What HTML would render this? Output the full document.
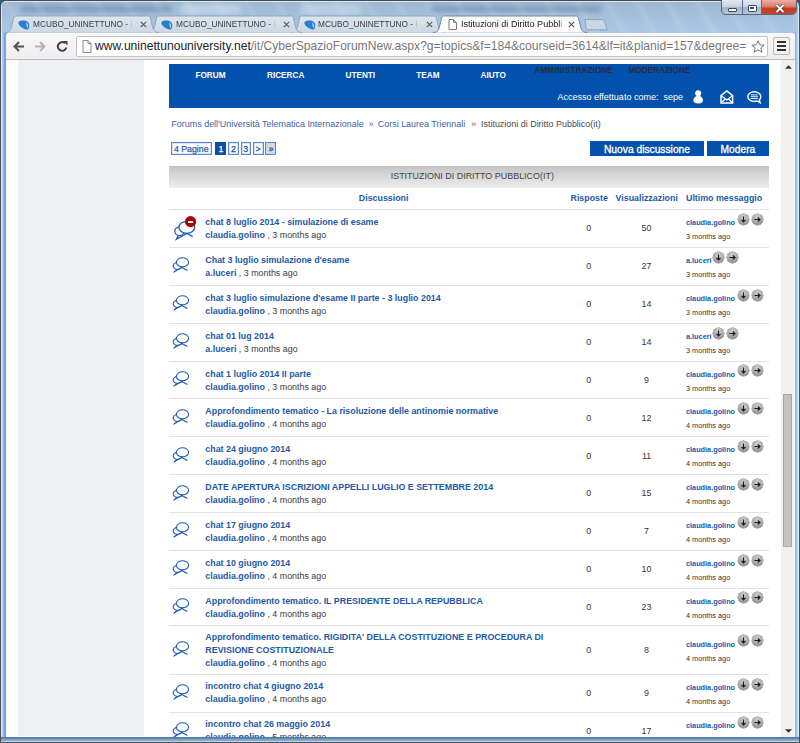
<!DOCTYPE html><html><head><meta charset="utf-8"><style>
*{box-sizing:border-box}
html,body{margin:0;padding:0}
body{width:800px;height:743px;overflow:hidden;position:relative;font-family:"Liberation Sans",sans-serif;background:#2f5876}
.abs{position:absolute}
#glass{position:absolute;left:0;top:0;width:800px;height:743px;background:linear-gradient(180deg,#9db8d2 0px,#a3bed8 12px,#a8c7e6 30px,#a3c0dc 400px,#8fb0d0 743px);border:1px solid #454a50;border-radius:6px 6px 0 0;box-shadow:inset 0 0 0 1px rgba(225,242,255,.85)}
.tab{position:absolute;top:16px;height:17px}
.tabtxt{position:absolute;top:3px;font-size:10.2px;color:#333;white-space:nowrap;overflow:hidden}
#toolbar{position:absolute;left:6px;top:33px;width:789px;height:27px;background:linear-gradient(#f8f8f8,#eeeeee);border-bottom:1px solid #b9b9b9;border-radius:3px 3px 0 0}
#vp{position:absolute;left:6px;top:60px;width:775px;height:677px;background:#fff;overflow:hidden}
#sb{position:absolute;left:781px;top:60px;width:14px;height:677px;background:#f0f0f0;border-right:1px solid #fff}
.t{position:absolute;white-space:nowrap;line-height:1}
.nav{font-size:8.2px;font-weight:bold;color:#fff}
.sep{position:absolute;left:163px;width:600px;height:1px;background:#e3e3e3}
.ttl{font-size:8.9px;font-weight:bold;color:#2459a8}
.au{font-size:8.9px;color:#3b3b3b}
.au b{color:#2459a8}
.num{font-size:8.9px;color:#333;text-align:center;width:40px}
.lm{font-size:7.3px;font-weight:bold;color:#2459a8}
.lt{font-size:7.3px;color:#333}
.rb{position:absolute;width:11px;height:11px;border-radius:50%;background:radial-gradient(circle at 50% 30%,#d2d2d2 0%,#a6a6a6 55%,#7a7a7a 100%);box-shadow:0 0 0 0.4px #6a6a6a}
.pg{position:absolute;top:82px;height:13px;border:1px solid #5a8ad0;box-shadow:inset 0 0 0 0.6px #b9cfee;font-size:8.8px;color:#2459a8;text-align:center;line-height:12px;background:#fff;-webkit-text-stroke:0.25px currentColor}
</style></head><body>
<div id="glass"></div>
<div class="abs" style="left:1px;top:1px;width:798px;height:32px;overflow:hidden;border-radius:5px 5px 0 0">
 <div class="abs" style="left:20px;top:5px;width:150px;height:6px;background:#5f7fa3;opacity:.55;filter:blur(2.5px)"></div>
 <div class="abs" style="left:180px;top:3px;width:60px;height:10px;background:#e8f0f8;opacity:.45;filter:blur(3px)"></div>
 <div class="abs" style="left:300px;top:2px;width:60px;height:12px;background:#e8f0f8;opacity:.35;filter:blur(3px)"></div>
 <div class="abs" style="left:430px;top:5px;width:170px;height:6px;background:#5f7fa3;opacity:.5;filter:blur(2.5px)"></div>
 <div class="abs" style="left:0;top:0;width:800px;height:32px;background:repeating-linear-gradient(60deg,rgba(255,255,255,0) 0px,rgba(255,255,255,0) 14px,rgba(255,255,255,.1) 20px,rgba(255,255,255,0) 26px)"></div>
</div>

<div class="abs" style="left:720.5px;top:-1px;width:76.5px;height:16px;border:1px solid #51667d;border-radius:0 0 5px 5px;overflow:hidden;background:linear-gradient(#e0e8f0 0%,#c9d6e3 45%,#9fb4ca 55%,#b8cadb 100%)">
 <div class="abs" style="left:20px;top:0;width:1px;height:16px;background:#5a6f86"></div>
 <div class="abs" style="left:39.5px;top:0;width:1px;height:16px;background:#5a6f86"></div>
 <div class="abs" style="left:40.5px;top:0;width:36px;height:16px;background:linear-gradient(#eab0a2 0%,#d9806c 40%,#c2391f 55%,#c64f33 100%)"></div>
 <div class="abs" style="left:6px;top:8px;width:9.5px;height:4px;background:#fff;border:1px solid #3d4b5c;border-radius:1px"></div>
 <div class="abs" style="left:26px;top:4.5px;width:9px;height:7px;border:1.3px solid #3d4b5c;background:#fff;border-radius:1px"></div>
 <div class="abs" style="left:28.3px;top:6.8px;width:4.4px;height:2.4px;border:0.8px solid #3d4b5c;background:#c5d2de"></div>
 <svg class="abs" style="left:53.5px;top:4.2px" width="10" height="9"><path d="M1.5 1 L8.5 8 M8.5 1 L1.5 8" stroke="#4a2a22" stroke-width="3.4"/><path d="M1.5 1 L8.5 8 M8.5 1 L1.5 8" stroke="#fff" stroke-width="2"/></svg>
</div>

<svg class="abs" style="left:290.59px;top:15px" width="156" height="19"><defs><linearGradient id="tg" x1="0" y1="0" x2="0" y2="1"><stop offset="0" stop-color="#dde5ed"/><stop offset="1" stop-color="#cdd8e3"/></linearGradient></defs><path d="M0 17.5 C3 17.5 5 16.5 6 13.5 L8.6 3 C9.2 1.3 10 1 11.5 1 L142.5 1 C144 1 144.8 1.3 145.4 3 L148 13.5 C149 16.5 151 17.5 154 17.5" fill="url(#tg)" stroke="#8fa6bd" stroke-width="1"/></svg>
<svg class="abs" style="left:303.59px;top:20px" width="12" height="10" viewBox="0 0 12 10"><path d="M0.5 2 C1.5 0.3 5 0 8 0.8 C10.5 1.6 11.6 4 11.2 6.5 C11 8.3 10.3 9.5 9.6 9.6 C7 9.4 2.8 7.5 1.2 5 C0.5 4 0.2 2.8 0.5 2 Z" fill="#2a80cf"/><path d="M8.3 2.2 C9.8 3.5 10.3 6 9.6 8.5 C8.8 6.5 8.4 4.4 8.3 2.2 Z" fill="#e6f0fa"/></svg>
<div class="abs" style="left:318.34px;top:19.4px;white-space:nowrap;font-size:9.6px;line-height:1;color:#3b3b48;transform:scaleX(0.865);transform-origin:0 0">MCUBO_UNINETTUNO - <span style="color:#bbb">I</span></div>
<svg class="abs" style="left:425.59px;top:21.3px" width="7" height="7"><path d="M0.8 0.8 L6.2 6.2 M6.2 0.8 L0.8 6.2" stroke="#555" stroke-width="1.1"/></svg>
<svg class="abs" style="left:147.92px;top:15px" width="156" height="19"><defs><linearGradient id="tg" x1="0" y1="0" x2="0" y2="1"><stop offset="0" stop-color="#dde5ed"/><stop offset="1" stop-color="#cdd8e3"/></linearGradient></defs><path d="M0 17.5 C3 17.5 5 16.5 6 13.5 L8.6 3 C9.2 1.3 10 1 11.5 1 L142.5 1 C144 1 144.8 1.3 145.4 3 L148 13.5 C149 16.5 151 17.5 154 17.5" fill="url(#tg)" stroke="#8fa6bd" stroke-width="1"/></svg>
<svg class="abs" style="left:160.92px;top:20px" width="12" height="10" viewBox="0 0 12 10"><path d="M0.5 2 C1.5 0.3 5 0 8 0.8 C10.5 1.6 11.6 4 11.2 6.5 C11 8.3 10.3 9.5 9.6 9.6 C7 9.4 2.8 7.5 1.2 5 C0.5 4 0.2 2.8 0.5 2 Z" fill="#2a80cf"/><path d="M8.3 2.2 C9.8 3.5 10.3 6 9.6 8.5 C8.8 6.5 8.4 4.4 8.3 2.2 Z" fill="#e6f0fa"/></svg>
<div class="abs" style="left:175.67px;top:19.4px;white-space:nowrap;font-size:9.6px;line-height:1;color:#3b3b48;transform:scaleX(0.865);transform-origin:0 0">MCUBO_UNINETTUNO - <span style="color:#bbb">I</span></div>
<svg class="abs" style="left:282.92px;top:21.3px" width="7" height="7"><path d="M0.8 0.8 L6.2 6.2 M6.2 0.8 L0.8 6.2" stroke="#555" stroke-width="1.1"/></svg>
<svg class="abs" style="left:5.25px;top:15px" width="156" height="19"><defs><linearGradient id="tg" x1="0" y1="0" x2="0" y2="1"><stop offset="0" stop-color="#dde5ed"/><stop offset="1" stop-color="#cdd8e3"/></linearGradient></defs><path d="M0 17.5 C3 17.5 5 16.5 6 13.5 L8.6 3 C9.2 1.3 10 1 11.5 1 L142.5 1 C144 1 144.8 1.3 145.4 3 L148 13.5 C149 16.5 151 17.5 154 17.5" fill="url(#tg)" stroke="#8fa6bd" stroke-width="1"/></svg>
<svg class="abs" style="left:18.25px;top:20px" width="12" height="10" viewBox="0 0 12 10"><path d="M0.5 2 C1.5 0.3 5 0 8 0.8 C10.5 1.6 11.6 4 11.2 6.5 C11 8.3 10.3 9.5 9.6 9.6 C7 9.4 2.8 7.5 1.2 5 C0.5 4 0.2 2.8 0.5 2 Z" fill="#2a80cf"/><path d="M8.3 2.2 C9.8 3.5 10.3 6 9.6 8.5 C8.8 6.5 8.4 4.4 8.3 2.2 Z" fill="#e6f0fa"/></svg>
<div class="abs" style="left:33.00px;top:19.4px;white-space:nowrap;font-size:9.6px;line-height:1;color:#3b3b48;transform:scaleX(0.865);transform-origin:0 0">MCUBO_UNINETTUNO - <span style="color:#bbb">I</span></div>
<svg class="abs" style="left:140.25px;top:21.3px" width="7" height="7"><path d="M0.8 0.8 L6.2 6.2 M6.2 0.8 L0.8 6.2" stroke="#555" stroke-width="1.1"/></svg>
<svg class="abs" style="left:433.26px;top:15px" width="156" height="19"><defs><linearGradient id="tg" x1="0" y1="0" x2="0" y2="1"><stop offset="0" stop-color="#dde5ed"/><stop offset="1" stop-color="#cdd8e3"/></linearGradient></defs><path d="M0 17.5 C3 17.5 5 16.5 6 13.5 L8.6 3 C9.2 1.3 10 1 11.5 1 L142.5 1 C144 1 144.8 1.3 145.4 3 L148 13.5 C149 16.5 151 17.5 154 17.5" fill="#fbfbfb" stroke="#6f8aa6" stroke-width="1"/></svg>
<svg class="abs" style="left:447.76px;top:19px" width="10" height="12"><path d="M1 0.5 H5.5 L8.5 3.5 V10.5 H1 Z M5.5 0.5 V3.5 H8.5" fill="#fff" stroke="#7a7a7a" stroke-width="1"/></svg>
<div class="abs" style="left:460.56px;top:19.2px;white-space:nowrap;font-size:9.7px;line-height:1;color:#222;transform:scaleX(0.936);transform-origin:0 0">Istituzioni di Diritto Pubbl<span style="color:#aaa">i</span></div>
<svg class="abs" style="left:568.26px;top:21.3px" width="7" height="7"><path d="M0.8 0.8 L6.2 6.2 M6.2 0.8 L0.8 6.2" stroke="#555" stroke-width="1.1"/></svg>
<svg class="abs" style="left:584px;top:18.5px" width="24" height="12"><path d="M1 0.6 H18.6 C19.4 0.6 19.8 1 20.1 1.6 L23.2 10.8 H3.5 C2.8 10.8 2.4 10.4 2.2 9.8 Z" fill="#c9d7e4" stroke="#88a2bc" stroke-width="0.9"/></svg>
<div id="toolbar">
 <svg class="abs" style="left:7px;top:8px" width="12" height="11"><path d="M11 5.5 H2 M6 1 L1.5 5.5 L6 10" fill="none" stroke="#555" stroke-width="2"/></svg>
 <svg class="abs" style="left:28px;top:8px" width="12" height="11"><path d="M1 5.5 H10 M6 1 L10.5 5.5 L6 10" fill="none" stroke="#b5b5b5" stroke-width="2"/></svg>
 <svg class="abs" style="left:50px;top:7px" width="13" height="13"><path d="M10.3 7.5 A4.3 4.3 0 1 1 9 3.2" fill="none" stroke="#444" stroke-width="2"/><path d="M7 1 L11.5 1 L11.5 5.5 Z" fill="#444"/></svg>
 <div class="abs" style="left:70px;top:3px;width:692px;height:21px;background:#fff;border:1px solid #c3c3c3;border-radius:2px"></div>
 <svg class="abs" style="left:76px;top:7px" width="10" height="13"><path d="M1 0.5 H6 L9 3.5 V12.5 H1 Z M6 0.5 V3.5 H9" fill="#fff" stroke="#888" stroke-width="1"/></svg>
 <div class="t" style="left:89px;top:7px;font-size:12.1px;color:#222">www.uninettunouniversity.net<span style="color:#777">/it/CyberSpazioForumNew.aspx?g=topics&amp;f=184&amp;courseid=3614&amp;lf=it&amp;planid=157&amp;degree=</span></div>
 <svg class="abs" style="left:745px;top:7px" width="14" height="13"><path d="M7 0.8 L8.8 4.9 L13.2 5.1 L9.8 7.9 L10.9 12.2 L7 9.8 L3.1 12.2 L4.2 7.9 L0.8 5.1 L5.2 4.9 Z" fill="none" stroke="#777" stroke-width="1"/></svg>
 <div class="abs" style="left:767px;top:4px;width:17px;height:18px;border:1px solid #bbb;border-radius:2px;background:#f2f2f2"></div>
 <div class="abs" style="left:771px;top:8px;width:9px;height:2px;background:#333"></div>
 <div class="abs" style="left:771px;top:12px;width:9px;height:2px;background:#333"></div>
 <div class="abs" style="left:771px;top:16px;width:9px;height:2px;background:#333"></div>
</div>

<div id="vp">
<div class="abs" style="left:12px;top:0;width:126px;height:676px;background:#eff0f3"></div>
<div class="abs" style="left:163px;top:4px;width:600px;height:44px;background:#0252ad"></div>
<div class="t nav" style="left:189.5px;top:11.5px">FORUM</div>
<div class="t nav" style="left:261px;top:11.5px">RICERCA</div>
<div class="t nav" style="left:339.5px;top:11.5px">UTENTI</div>
<div class="t nav" style="left:410.3px;top:11.5px">TEAM</div>
<div class="t nav" style="left:474.5px;top:11.5px">AIUTO</div>
<div class="t nav" style="left:528.5px;top:7.400000000000006px;color:#262d38;letter-spacing:0.07px">AMMINISTRAZIONE</div>
<div class="t nav" style="left:622.4px;top:7.400000000000006px;color:#262d38;letter-spacing:0.07px">MODERAZIONE</div>
<div class="t" style="left:551.5px;top:32.5px;font-size:9px;color:#fff">Accesso effettuato come:&nbsp; sepe</div>
<svg class="abs" style="left:686.5px;top:29.5px" width="11" height="14"><circle cx="5.2" cy="3.2" r="3" fill="#fff"/><path d="M5.2 5.8 C2.2 5.8 0.4 8.3 0.4 10.6 C0.4 12.6 2.4 13.6 5.2 13.6 C8 13.6 10 12.6 10 10.6 C10 8.3 8.2 5.8 5.2 5.8 Z" fill="#fff"/></svg>
<svg class="abs" style="left:713.5px;top:29.5px" width="14" height="14"><path d="M1 5.6 L6.8 0.9 L12.6 5.6 V12.9 H1 Z" fill="none" stroke="#fff" stroke-width="1.5"/><path d="M1.2 5.8 L6.8 10 L12.4 5.8 M1.2 12.7 L5.2 9 M12.4 12.7 L8.4 9" fill="none" stroke="#fff" stroke-width="1.2"/></svg>
<svg class="abs" style="left:741px;top:30.799999999999997px" width="16" height="13"><path d="M7.3 0.8 C3.6 0.8 0.8 3 0.8 5.6 C0.8 8.2 3.6 10.4 7.3 10.4 C8.3 10.4 9.2 10.3 10 10 L13.2 11.8 L12.3 9.1 C13.2 8.2 13.8 7 13.8 5.6 C13.8 3 11 0.8 7.3 0.8 Z" fill="none" stroke="#fff" stroke-width="1.4"/><path d="M3.8 3.9 H10.8 M3.8 5.7 H10.8 M3.8 7.5 H10.8" stroke="#fff" stroke-width="0.9"/></svg>
<div class="t" style="left:165.25px;top:59.5px;font-size:8.98px;color:#3b62a8">Forums dell'Università Telematica Internazionale</div>
<div class="t" style="left:362.8px;top:60.3px;font-size:8.6px;color:#5a6480">»</div>
<div class="t" style="left:371.8px;top:59.5px;font-size:8.95px;color:#3b62a8">Corsi Laurea Triennali</div>
<div class="t" style="left:465.3px;top:60.3px;font-size:8.6px;color:#5a6480">»</div>
<div class="t" style="left:475px;top:59.5px;font-size:8.95px;color:#4a4a4a">Istituzioni di Diritto Pubblico(it)</div>
<div class="pg" style="left:164.8px;top:82.19999999999999px;width:40.9px;background:#fff;color:#2f5a9e;font-weight:normal">4 Pagine</div>
<div class="pg" style="left:209.3px;top:82.19999999999999px;width:11.2px;background:#0a4ea8;color:#fff;font-weight:normal;box-shadow:none;border-color:#0a4ea8">1</div>
<div class="pg" style="left:222px;top:82.19999999999999px;width:10.7px;background:#fff;color:#0a4ea8;font-weight:normal">2</div>
<div class="pg" style="left:234.5px;top:82.19999999999999px;width:10.5px;background:#fff;color:#0a4ea8;font-weight:normal">3</div>
<div class="pg" style="left:246.7px;top:82.19999999999999px;width:11.0px;background:#fff;color:#0a4ea8;font-weight:normal">&gt;</div>
<div class="pg" style="left:259.3px;top:82.19999999999999px;width:11.2px;background:#dcdcdc;color:#0a4ea8;font-weight:normal">»</div>
<div class="abs" style="left:584px;top:81.30000000000001px;width:114.0px;height:15.2px;background:#0252ad;color:#fff;font-size:10.25px;-webkit-text-stroke:0.3px #fff;text-align:center;line-height:17px">Nuova discussione</div>
<div class="abs" style="left:701px;top:81.30000000000001px;width:61.8px;height:15.2px;background:#0252ad;color:#fff;font-size:10.25px;-webkit-text-stroke:0.3px #fff;text-align:center;line-height:17px">Modera</div>
<div class="abs" style="left:163px;top:105.69999999999999px;width:600px;height:22.5px;background:linear-gradient(#c4c4c4,#eeeeee)"></div>
<div class="t" style="left:384.7px;top:111.5px;font-size:8.95px;color:#444">ISTITUZIONI DI DIRITTO PUBBLICO(IT)</div>
<div class="t" style="left:352.8px;top:133.8px;font-size:8.85px;font-weight:bold;color:#2459a8">Discussioni</div>
<div class="t" style="left:564.5px;top:133.8px;font-size:8.85px;font-weight:bold;color:#2459a8">Risposte</div>
<div class="t" style="left:609.6px;top:133.8px;font-size:8.85px;font-weight:bold;color:#2459a8">Visualizzazioni</div>
<div class="t" style="left:680px;top:133.8px;font-size:8.85px;font-weight:bold;color:#2459a8">Ultimo messaggio</div>
<div class="sep" style="left:163px;top:149.0px;width:600px"></div>
<div class="t ttl" style="left:199.3px;top:158.0px">chat 8 luglio 2014 - simulazione di esame</div>
<div class="t au" style="left:199.3px;top:171.0px"><b>claudia.golino</b> , 3 months ago</div>
<svg class="abs" style="left:166px;top:154.0px" width="28" height="28" viewBox="0 0 28 28"><g fill="none" stroke="#1d5db5" stroke-width="1.25"><ellipse cx="7.5" cy="17.3" rx="4.7" ry="4.3"/><ellipse cx="14.8" cy="13.3" rx="7.9" ry="6" fill="#fff"/><path d="M6.3 21.4 L4.4 25.2 L15 19.5 L20.6 22.6"/></g><circle cx="18.55" cy="7.65" r="5.6" fill="#a8050a"/><rect x="16.1" y="7.1" width="5" height="1.9" fill="#fff"/></svg>
<div class="t num" style="left:562.8px;top:164.2px">0</div>
<div class="t num" style="left:620.5px;top:164.2px">50</div>
<div class="t lm" style="left:680px;top:158.9px">claudia.golino</div>
<div class="t lt" style="left:680px;top:172.9px">3 months ago</div>
<div class="rb" style="left:732.2px;top:153.8px"><svg width="11" height="11" style="position:absolute;left:0;top:0"><path d="M5.5 2.5 V7.5 M3.5 5.8 L5.5 8 L7.5 5.8" fill="none" stroke="#1a1a1a" stroke-width="1.15"/></svg></div>
<div class="rb" style="left:745.7px;top:153.8px"><svg width="11" height="11" style="position:absolute;left:0;top:0"><path d="M2.5 5.5 H7.5 M5.8 3.5 L8 5.5 L5.8 7.5" fill="none" stroke="#1a1a1a" stroke-width="1.15"/></svg></div>
<div class="sep" style="left:163px;top:186.9px;width:600px"></div>
<div class="t ttl" style="left:199.3px;top:196.0px">Chat 3 luglio simulazione d'esame</div>
<div class="t au" style="left:199.3px;top:209.0px"><b>a.luceri</b> , 3 months ago</div>
<div class="abs" style="left:166px;top:195.2px"><svg class="ci" width="20" height="20" viewBox="0 0 20 20"><g fill="none" stroke="#1d5db5" stroke-width="1.1"><ellipse cx="5.7" cy="10.9" rx="4.5" ry="3.5"/><ellipse cx="10.5" cy="7.3" rx="6.1" ry="4.5" fill="#fff"/><path d="M4.8 14.3 L1.6 17.3 L9.8 12.4 L15.4 15.6"/></g></svg></div>
<div class="t num" style="left:562.8px;top:202.1px">0</div>
<div class="t num" style="left:620.5px;top:202.1px">27</div>
<div class="t lm" style="left:680px;top:196.8px">a.luceri</div>
<div class="t lt" style="left:680px;top:210.8px">3 months ago</div>
<div class="rb" style="left:707px;top:191.7px"><svg width="11" height="11" style="position:absolute;left:0;top:0"><path d="M5.5 2.5 V7.5 M3.5 5.8 L5.5 8 L7.5 5.8" fill="none" stroke="#1a1a1a" stroke-width="1.15"/></svg></div>
<div class="rb" style="left:720.5px;top:191.7px"><svg width="11" height="11" style="position:absolute;left:0;top:0"><path d="M2.5 5.5 H7.5 M5.8 3.5 L8 5.5 L5.8 7.5" fill="none" stroke="#1a1a1a" stroke-width="1.15"/></svg></div>
<div class="sep" style="left:163px;top:224.8px;width:600px"></div>
<div class="t ttl" style="left:199.3px;top:234.0px">chat 3 luglio simulazione d'esame II parte - 3 luglio 2014</div>
<div class="t au" style="left:199.3px;top:247.0px"><b>claudia.golino</b> , 3 months ago</div>
<div class="abs" style="left:166px;top:233.1px"><svg class="ci" width="20" height="20" viewBox="0 0 20 20"><g fill="none" stroke="#1d5db5" stroke-width="1.1"><ellipse cx="5.7" cy="10.9" rx="4.5" ry="3.5"/><ellipse cx="10.5" cy="7.3" rx="6.1" ry="4.5" fill="#fff"/><path d="M4.8 14.3 L1.6 17.3 L9.8 12.4 L15.4 15.6"/></g></svg></div>
<div class="t num" style="left:562.8px;top:240.0px">0</div>
<div class="t num" style="left:620.5px;top:240.0px">14</div>
<div class="t lm" style="left:680px;top:234.7px">claudia.golino</div>
<div class="t lt" style="left:680px;top:248.7px">3 months ago</div>
<div class="rb" style="left:732.2px;top:229.6px"><svg width="11" height="11" style="position:absolute;left:0;top:0"><path d="M5.5 2.5 V7.5 M3.5 5.8 L5.5 8 L7.5 5.8" fill="none" stroke="#1a1a1a" stroke-width="1.15"/></svg></div>
<div class="rb" style="left:745.7px;top:229.6px"><svg width="11" height="11" style="position:absolute;left:0;top:0"><path d="M2.5 5.5 H7.5 M5.8 3.5 L8 5.5 L5.8 7.5" fill="none" stroke="#1a1a1a" stroke-width="1.15"/></svg></div>
<div class="sep" style="left:163px;top:262.6px;width:600px"></div>
<div class="t ttl" style="left:199.3px;top:272.0px">chat 01 lug 2014</div>
<div class="t au" style="left:199.3px;top:285.0px"><b>a.luceri</b> , 3 months ago</div>
<div class="abs" style="left:166px;top:271.0px"><svg class="ci" width="20" height="20" viewBox="0 0 20 20"><g fill="none" stroke="#1d5db5" stroke-width="1.1"><ellipse cx="5.7" cy="10.9" rx="4.5" ry="3.5"/><ellipse cx="10.5" cy="7.3" rx="6.1" ry="4.5" fill="#fff"/><path d="M4.8 14.3 L1.6 17.3 L9.8 12.4 L15.4 15.6"/></g></svg></div>
<div class="t num" style="left:562.8px;top:277.9px">0</div>
<div class="t num" style="left:620.5px;top:277.9px">14</div>
<div class="t lm" style="left:680px;top:272.6px">a.luceri</div>
<div class="t lt" style="left:680px;top:286.6px">3 months ago</div>
<div class="rb" style="left:707px;top:267.5px"><svg width="11" height="11" style="position:absolute;left:0;top:0"><path d="M5.5 2.5 V7.5 M3.5 5.8 L5.5 8 L7.5 5.8" fill="none" stroke="#1a1a1a" stroke-width="1.15"/></svg></div>
<div class="rb" style="left:720.5px;top:267.5px"><svg width="11" height="11" style="position:absolute;left:0;top:0"><path d="M2.5 5.5 H7.5 M5.8 3.5 L8 5.5 L5.8 7.5" fill="none" stroke="#1a1a1a" stroke-width="1.15"/></svg></div>
<div class="sep" style="left:163px;top:300.5px;width:600px"></div>
<div class="t ttl" style="left:199.3px;top:310.0px">chat 1 luglio 2014 II parte</div>
<div class="t au" style="left:199.3px;top:323.0px"><b>claudia.golino</b> , 3 months ago</div>
<div class="abs" style="left:166px;top:308.9px"><svg class="ci" width="20" height="20" viewBox="0 0 20 20"><g fill="none" stroke="#1d5db5" stroke-width="1.1"><ellipse cx="5.7" cy="10.9" rx="4.5" ry="3.5"/><ellipse cx="10.5" cy="7.3" rx="6.1" ry="4.5" fill="#fff"/><path d="M4.8 14.3 L1.6 17.3 L9.8 12.4 L15.4 15.6"/></g></svg></div>
<div class="t num" style="left:562.8px;top:315.8px">0</div>
<div class="t num" style="left:620.5px;top:315.8px">9</div>
<div class="t lm" style="left:680px;top:310.5px">claudia.golino</div>
<div class="t lt" style="left:680px;top:324.5px">3 months ago</div>
<div class="rb" style="left:732.2px;top:305.4px"><svg width="11" height="11" style="position:absolute;left:0;top:0"><path d="M5.5 2.5 V7.5 M3.5 5.8 L5.5 8 L7.5 5.8" fill="none" stroke="#1a1a1a" stroke-width="1.15"/></svg></div>
<div class="rb" style="left:745.7px;top:305.4px"><svg width="11" height="11" style="position:absolute;left:0;top:0"><path d="M2.5 5.5 H7.5 M5.8 3.5 L8 5.5 L5.8 7.5" fill="none" stroke="#1a1a1a" stroke-width="1.15"/></svg></div>
<div class="sep" style="left:163px;top:338.4px;width:600px"></div>
<div class="t ttl" style="left:199.3px;top:347.0px">Approfondimento tematico - La risoluzione delle antinomie normative</div>
<div class="t au" style="left:199.3px;top:360.0px"><b>claudia.golino</b> , 4 months ago</div>
<div class="abs" style="left:166px;top:346.7px"><svg class="ci" width="20" height="20" viewBox="0 0 20 20"><g fill="none" stroke="#1d5db5" stroke-width="1.1"><ellipse cx="5.7" cy="10.9" rx="4.5" ry="3.5"/><ellipse cx="10.5" cy="7.3" rx="6.1" ry="4.5" fill="#fff"/><path d="M4.8 14.3 L1.6 17.3 L9.8 12.4 L15.4 15.6"/></g></svg></div>
<div class="t num" style="left:562.8px;top:353.6px">0</div>
<div class="t num" style="left:620.5px;top:353.6px">12</div>
<div class="t lm" style="left:680px;top:348.3px">claudia.golino</div>
<div class="t lt" style="left:680px;top:362.3px">4 months ago</div>
<div class="rb" style="left:732.2px;top:343.2px"><svg width="11" height="11" style="position:absolute;left:0;top:0"><path d="M5.5 2.5 V7.5 M3.5 5.8 L5.5 8 L7.5 5.8" fill="none" stroke="#1a1a1a" stroke-width="1.15"/></svg></div>
<div class="rb" style="left:745.7px;top:343.2px"><svg width="11" height="11" style="position:absolute;left:0;top:0"><path d="M2.5 5.5 H7.5 M5.8 3.5 L8 5.5 L5.8 7.5" fill="none" stroke="#1a1a1a" stroke-width="1.15"/></svg></div>
<div class="sep" style="left:163px;top:376.3px;width:600px"></div>
<div class="t ttl" style="left:199.3px;top:385.0px">chat 24 giugno 2014</div>
<div class="t au" style="left:199.3px;top:398.0px"><b>claudia.golino</b> , 4 months ago</div>
<div class="abs" style="left:166px;top:384.6px"><svg class="ci" width="20" height="20" viewBox="0 0 20 20"><g fill="none" stroke="#1d5db5" stroke-width="1.1"><ellipse cx="5.7" cy="10.9" rx="4.5" ry="3.5"/><ellipse cx="10.5" cy="7.3" rx="6.1" ry="4.5" fill="#fff"/><path d="M4.8 14.3 L1.6 17.3 L9.8 12.4 L15.4 15.6"/></g></svg></div>
<div class="t num" style="left:562.8px;top:391.5px">0</div>
<div class="t num" style="left:620.5px;top:391.5px">11</div>
<div class="t lm" style="left:680px;top:386.2px">claudia.golino</div>
<div class="t lt" style="left:680px;top:400.2px">4 months ago</div>
<div class="rb" style="left:732.2px;top:381.1px"><svg width="11" height="11" style="position:absolute;left:0;top:0"><path d="M5.5 2.5 V7.5 M3.5 5.8 L5.5 8 L7.5 5.8" fill="none" stroke="#1a1a1a" stroke-width="1.15"/></svg></div>
<div class="rb" style="left:745.7px;top:381.1px"><svg width="11" height="11" style="position:absolute;left:0;top:0"><path d="M2.5 5.5 H7.5 M5.8 3.5 L8 5.5 L5.8 7.5" fill="none" stroke="#1a1a1a" stroke-width="1.15"/></svg></div>
<div class="sep" style="left:163px;top:414.2px;width:600px"></div>
<div class="t ttl" style="left:199.3px;top:423.0px">DATE APERTURA ISCRIZIONI APPELLI LUGLIO E SETTEMBRE 2014</div>
<div class="t au" style="left:199.3px;top:436.0px"><b>claudia.golino</b> , 4 months ago</div>
<div class="abs" style="left:166px;top:422.5px"><svg class="ci" width="20" height="20" viewBox="0 0 20 20"><g fill="none" stroke="#1d5db5" stroke-width="1.1"><ellipse cx="5.7" cy="10.9" rx="4.5" ry="3.5"/><ellipse cx="10.5" cy="7.3" rx="6.1" ry="4.5" fill="#fff"/><path d="M4.8 14.3 L1.6 17.3 L9.8 12.4 L15.4 15.6"/></g></svg></div>
<div class="t num" style="left:562.8px;top:429.4px">0</div>
<div class="t num" style="left:620.5px;top:429.4px">15</div>
<div class="t lm" style="left:680px;top:424.1px">claudia.golino</div>
<div class="t lt" style="left:680px;top:438.1px">4 months ago</div>
<div class="rb" style="left:732.2px;top:419.0px"><svg width="11" height="11" style="position:absolute;left:0;top:0"><path d="M5.5 2.5 V7.5 M3.5 5.8 L5.5 8 L7.5 5.8" fill="none" stroke="#1a1a1a" stroke-width="1.15"/></svg></div>
<div class="rb" style="left:745.7px;top:419.0px"><svg width="11" height="11" style="position:absolute;left:0;top:0"><path d="M2.5 5.5 H7.5 M5.8 3.5 L8 5.5 L5.8 7.5" fill="none" stroke="#1a1a1a" stroke-width="1.15"/></svg></div>
<div class="sep" style="left:163px;top:452.0px;width:600px"></div>
<div class="t ttl" style="left:199.3px;top:461.0px">chat 17 giugno 2014</div>
<div class="t au" style="left:199.3px;top:474.0px"><b>claudia.golino</b> , 4 months ago</div>
<div class="abs" style="left:166px;top:460.4px"><svg class="ci" width="20" height="20" viewBox="0 0 20 20"><g fill="none" stroke="#1d5db5" stroke-width="1.1"><ellipse cx="5.7" cy="10.9" rx="4.5" ry="3.5"/><ellipse cx="10.5" cy="7.3" rx="6.1" ry="4.5" fill="#fff"/><path d="M4.8 14.3 L1.6 17.3 L9.8 12.4 L15.4 15.6"/></g></svg></div>
<div class="t num" style="left:562.8px;top:467.3px">0</div>
<div class="t num" style="left:620.5px;top:467.3px">7</div>
<div class="t lm" style="left:680px;top:462.0px">claudia.golino</div>
<div class="t lt" style="left:680px;top:476.0px">4 months ago</div>
<div class="rb" style="left:732.2px;top:456.9px"><svg width="11" height="11" style="position:absolute;left:0;top:0"><path d="M5.5 2.5 V7.5 M3.5 5.8 L5.5 8 L7.5 5.8" fill="none" stroke="#1a1a1a" stroke-width="1.15"/></svg></div>
<div class="rb" style="left:745.7px;top:456.9px"><svg width="11" height="11" style="position:absolute;left:0;top:0"><path d="M2.5 5.5 H7.5 M5.8 3.5 L8 5.5 L5.8 7.5" fill="none" stroke="#1a1a1a" stroke-width="1.15"/></svg></div>
<div class="sep" style="left:163px;top:489.9px;width:600px"></div>
<div class="t ttl" style="left:199.3px;top:499.0px">chat 10 giugno 2014</div>
<div class="t au" style="left:199.3px;top:512.0px"><b>claudia.golino</b> , 4 months ago</div>
<div class="abs" style="left:166px;top:498.3px"><svg class="ci" width="20" height="20" viewBox="0 0 20 20"><g fill="none" stroke="#1d5db5" stroke-width="1.1"><ellipse cx="5.7" cy="10.9" rx="4.5" ry="3.5"/><ellipse cx="10.5" cy="7.3" rx="6.1" ry="4.5" fill="#fff"/><path d="M4.8 14.3 L1.6 17.3 L9.8 12.4 L15.4 15.6"/></g></svg></div>
<div class="t num" style="left:562.8px;top:505.2px">0</div>
<div class="t num" style="left:620.5px;top:505.2px">10</div>
<div class="t lm" style="left:680px;top:499.9px">claudia.golino</div>
<div class="t lt" style="left:680px;top:513.9px">4 months ago</div>
<div class="rb" style="left:732.2px;top:494.8px"><svg width="11" height="11" style="position:absolute;left:0;top:0"><path d="M5.5 2.5 V7.5 M3.5 5.8 L5.5 8 L7.5 5.8" fill="none" stroke="#1a1a1a" stroke-width="1.15"/></svg></div>
<div class="rb" style="left:745.7px;top:494.8px"><svg width="11" height="11" style="position:absolute;left:0;top:0"><path d="M2.5 5.5 H7.5 M5.8 3.5 L8 5.5 L5.8 7.5" fill="none" stroke="#1a1a1a" stroke-width="1.15"/></svg></div>
<div class="sep" style="left:163px;top:527.8px;width:600px"></div>
<div class="t ttl" style="left:199.3px;top:537.0px">Approfondimento tematico. IL PRESIDENTE DELLA REPUBBLICA</div>
<div class="t au" style="left:199.3px;top:550.0px"><b>claudia.golino</b> , 4 months ago</div>
<div class="abs" style="left:166px;top:535.9px"><svg class="ci" width="20" height="20" viewBox="0 0 20 20"><g fill="none" stroke="#1d5db5" stroke-width="1.1"><ellipse cx="5.7" cy="10.9" rx="4.5" ry="3.5"/><ellipse cx="10.5" cy="7.3" rx="6.1" ry="4.5" fill="#fff"/><path d="M4.8 14.3 L1.6 17.3 L9.8 12.4 L15.4 15.6"/></g></svg></div>
<div class="t num" style="left:562.8px;top:542.8px">0</div>
<div class="t num" style="left:620.5px;top:542.8px">23</div>
<div class="t lm" style="left:680px;top:537.5px">claudia.golino</div>
<div class="t lt" style="left:680px;top:551.5px">4 months ago</div>
<div class="rb" style="left:732.2px;top:532.4px"><svg width="11" height="11" style="position:absolute;left:0;top:0"><path d="M5.5 2.5 V7.5 M3.5 5.8 L5.5 8 L7.5 5.8" fill="none" stroke="#1a1a1a" stroke-width="1.15"/></svg></div>
<div class="rb" style="left:745.7px;top:532.4px"><svg width="11" height="11" style="position:absolute;left:0;top:0"><path d="M2.5 5.5 H7.5 M5.8 3.5 L8 5.5 L5.8 7.5" fill="none" stroke="#1a1a1a" stroke-width="1.15"/></svg></div>
<div class="sep" style="left:163px;top:565.3px;width:600px"></div>
<div class="t ttl" style="left:199.3px;top:573.0px">Approfondimento tematico. RIGIDITA' DELLA COSTITUZIONE E PROCEDURA DI</div>
<div class="t ttl" style="left:199.3px;top:586.0px">REVISIONE COSTITUZIONALE</div>
<div class="t au" style="left:199.3px;top:599.0px"><b>claudia.golino</b> , 4 months ago</div>
<div class="abs" style="left:166px;top:578.9px"><svg class="ci" width="20" height="20" viewBox="0 0 20 20"><g fill="none" stroke="#1d5db5" stroke-width="1.1"><ellipse cx="5.7" cy="10.9" rx="4.5" ry="3.5"/><ellipse cx="10.5" cy="7.3" rx="6.1" ry="4.5" fill="#fff"/><path d="M4.8 14.3 L1.6 17.3 L9.8 12.4 L15.4 15.6"/></g></svg></div>
<div class="t num" style="left:562.8px;top:585.8px">0</div>
<div class="t num" style="left:620.5px;top:585.8px">8</div>
<div class="t lm" style="left:680px;top:580.5px">claudia.golino</div>
<div class="t lt" style="left:680px;top:594.5px">4 months ago</div>
<div class="rb" style="left:732.2px;top:575.4px"><svg width="11" height="11" style="position:absolute;left:0;top:0"><path d="M5.5 2.5 V7.5 M3.5 5.8 L5.5 8 L7.5 5.8" fill="none" stroke="#1a1a1a" stroke-width="1.15"/></svg></div>
<div class="rb" style="left:745.7px;top:575.4px"><svg width="11" height="11" style="position:absolute;left:0;top:0"><path d="M2.5 5.5 H7.5 M5.8 3.5 L8 5.5 L5.8 7.5" fill="none" stroke="#1a1a1a" stroke-width="1.15"/></svg></div>
<div class="sep" style="left:163px;top:613.7px;width:600px"></div>
<div class="t ttl" style="left:199.3px;top:622.0px">incontro chat 4 giugno 2014</div>
<div class="t au" style="left:199.3px;top:635.0px"><b>claudia.golino</b> , 4 months ago</div>
<div class="abs" style="left:166px;top:622.1px"><svg class="ci" width="20" height="20" viewBox="0 0 20 20"><g fill="none" stroke="#1d5db5" stroke-width="1.1"><ellipse cx="5.7" cy="10.9" rx="4.5" ry="3.5"/><ellipse cx="10.5" cy="7.3" rx="6.1" ry="4.5" fill="#fff"/><path d="M4.8 14.3 L1.6 17.3 L9.8 12.4 L15.4 15.6"/></g></svg></div>
<div class="t num" style="left:562.8px;top:629.0px">0</div>
<div class="t num" style="left:620.5px;top:629.0px">9</div>
<div class="t lm" style="left:680px;top:623.7px">claudia.golino</div>
<div class="t lt" style="left:680px;top:637.7px">4 months ago</div>
<div class="rb" style="left:732.2px;top:618.6px"><svg width="11" height="11" style="position:absolute;left:0;top:0"><path d="M5.5 2.5 V7.5 M3.5 5.8 L5.5 8 L7.5 5.8" fill="none" stroke="#1a1a1a" stroke-width="1.15"/></svg></div>
<div class="rb" style="left:745.7px;top:618.6px"><svg width="11" height="11" style="position:absolute;left:0;top:0"><path d="M2.5 5.5 H7.5 M5.8 3.5 L8 5.5 L5.8 7.5" fill="none" stroke="#1a1a1a" stroke-width="1.15"/></svg></div>
<div class="sep" style="left:163px;top:651.7px;width:600px"></div>
<div class="t ttl" style="left:199.3px;top:660.0px">incontro chat 26 maggio 2014</div>
<div class="t au" style="left:199.3px;top:673.0px"><b>claudia.golino</b> , 5 months ago</div>
<div class="abs" style="left:166px;top:660.1px"><svg class="ci" width="20" height="20" viewBox="0 0 20 20"><g fill="none" stroke="#1d5db5" stroke-width="1.1"><ellipse cx="5.7" cy="10.9" rx="4.5" ry="3.5"/><ellipse cx="10.5" cy="7.3" rx="6.1" ry="4.5" fill="#fff"/><path d="M4.8 14.3 L1.6 17.3 L9.8 12.4 L15.4 15.6"/></g></svg></div>
<div class="t num" style="left:562.8px;top:667.0px">0</div>
<div class="t num" style="left:620.5px;top:667.0px">17</div>
<div class="t lm" style="left:680px;top:661.7px">claudia.golino</div>
<div class="t lt" style="left:680px;top:675.7px">5 months ago</div>
<div class="rb" style="left:732.2px;top:656.6px"><svg width="11" height="11" style="position:absolute;left:0;top:0"><path d="M5.5 2.5 V7.5 M3.5 5.8 L5.5 8 L7.5 5.8" fill="none" stroke="#1a1a1a" stroke-width="1.15"/></svg></div>
<div class="rb" style="left:745.7px;top:656.6px"><svg width="11" height="11" style="position:absolute;left:0;top:0"><path d="M2.5 5.5 H7.5 M5.8 3.5 L8 5.5 L5.8 7.5" fill="none" stroke="#1a1a1a" stroke-width="1.15"/></svg></div>
</div>
<div id="sb">
 <svg class="abs" style="left:3.5px;top:5.2px" width="7" height="4"><path d="M0 3.7 L3.5 0.2 L7 3.7 Z" fill="#333"/></svg>
 <div class="abs" style="left:2px;top:334px;width:9px;height:153px;background:#c2c2c2;border:1px solid #a8a8a8"></div>
 <svg class="abs" style="left:3.5px;top:668.5px" width="7" height="4"><path d="M0 0.3 L3.5 3.8 L7 0.3 Z" fill="#333"/></svg>
</div>
<div class="abs" style="left:1px;top:33px;width:5px;height:710px;background:linear-gradient(90deg,#d8f0ff 0px,#d8f0ff 0.8px,#a9cdf2 1.5px,#94bae3 3px,#6b8db6 4px,#a7b4c2 5px)"></div>
<div class="abs" style="left:795px;top:33px;width:4px;height:710px;background:linear-gradient(90deg,#9fb2c6 0px,#8ea9c9 1px,#b9d9f8 1.8px,#bcdcfa 2.8px,#dff5ff 4px)"></div>
<div class="abs" style="left:1px;top:737px;width:798px;height:5px;background:linear-gradient(#5f7895 0px,#557a9e 1px,#7fa5cc 2.5px,#85aad0 3.5px,#c0d8ee 4px,#c0d8ee 5px)"></div>
<div class="abs" style="left:0;top:742px;width:800px;height:1px;background:#4a5058"></div>
<div class="abs" style="left:0;top:33px;width:1px;height:710px;background:#4a5058"></div>
<div class="abs" style="left:799px;top:33px;width:1px;height:710px;background:#4a5058"></div>

</body></html>
